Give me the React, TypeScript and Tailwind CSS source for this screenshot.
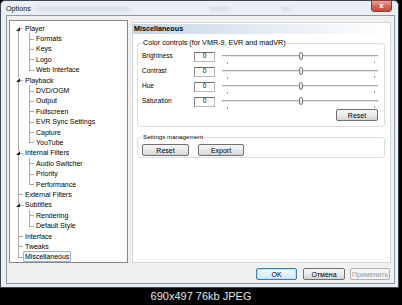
import React from 'react'

type Node = { label: string; level: 0 | 1; expand?: boolean; last?: boolean; selected?: boolean }

const tree: Node[] = [
  { label: 'Player', level: 0, expand: true },
  { label: 'Formats', level: 1 },
  { label: 'Keys', level: 1 },
  { label: 'Logo', level: 1 },
  { label: 'Web Interface', level: 1, last: true },
  { label: 'Playback', level: 0, expand: true },
  { label: 'DVD/OGM', level: 1 },
  { label: 'Output', level: 1 },
  { label: 'Fullscreen', level: 1 },
  { label: 'EVR Sync Settings', level: 1 },
  { label: 'Capture', level: 1 },
  { label: 'YouTube', level: 1, last: true },
  { label: 'Internal Filters', level: 0, expand: true },
  { label: 'Audio Switcher', level: 1 },
  { label: 'Priority', level: 1 },
  { label: 'Performance', level: 1, last: true },
  { label: 'External Filters', level: 0 },
  { label: 'Subtitles', level: 0, expand: true },
  { label: 'Rendering', level: 1 },
  { label: 'Default Style', level: 1, last: true },
  { label: 'Interface', level: 0 },
  { label: 'Tweaks', level: 0 },
  { label: 'Miscellaneous', level: 0, last: true, selected: true },
]

const btn =
  'flex items-center justify-center rounded-[2px] border border-[#707070] bg-linear-to-b from-[#f4f4f4] via-[#ebebeb] to-[#d4d4d4] text-[7px] leading-none text-black'

function TreeRow({ node, index }: { node: Node; index: number }) {
  const rootLine =
    node.level === 1 ? 'top-0 bottom-0' : index === 0 ? 'top-1/2 bottom-0' : node.last ? 'top-0 bottom-1/2' : 'top-0 bottom-0'
  return (
    <div className="relative flex h-[10.4px] items-center">
      <span className={`absolute left-[8px] w-px bg-[#a8a8a8] ${rootLine}`} />
      {node.level === 1 && (
        <span className={`absolute left-[19px] w-px bg-[#a8a8a8] top-0 ${node.last ? 'bottom-1/2' : 'bottom-0'}`} />
      )}
      <span className={`absolute top-1/2 h-px w-[5px] bg-[#a8a8a8] ${node.level === 0 ? 'left-[8px]' : 'left-[19px]'}`} />
      {node.expand && (
        <svg className="absolute left-[6px] top-[3.5px] h-[4px] w-[4px] bg-white" viewBox="0 0 4 4">
          <polygon points="4,0 4,4 0,4" fill="#2a2a2a" />
        </svg>
      )}
      <span
        className={`${node.level === 0 ? 'ml-[13px]' : 'ml-[24px]'} whitespace-nowrap px-[1px] text-[7px] leading-[9px] ${
          node.selected ? 'border border-[#9db4cc] bg-[#f3f8fd] rounded-[1px]' : 'border border-transparent'
        }`}
      >
        {node.label}
      </span>
    </div>
  )
}

function SliderRow({ label }: { label: string }) {
  return (
    <div className="flex h-[15px] items-center">
      <span className="w-[52px] text-[6.5px] leading-none">{label}</span>
      <div className="flex h-[10px] w-[21px] items-center justify-center border border-[#b5b8bd] border-t-[#6f6f6f] border-l-[#8a8a8a] bg-white text-[6.5px] leading-none">
        0
      </div>
      <div className="relative ml-[7px] h-full w-[156px]">
        <span className="absolute left-0 right-0 top-[6px] h-px bg-[#a9a9a9]" />
        <span className="absolute left-0 right-0 top-[7px] h-px bg-[#e6e6e6]" />
        <span className="absolute left-[77px] top-[2.5px] h-[8px] w-[4px] rounded-[2px] border border-[#7c7c7c] bg-linear-to-b from-white to-[#dcdcdc]" />
        <span className="absolute left-[5px] top-[13px] h-[2px] w-px bg-[#9a9a9a]" />
        <span className="absolute right-[3px] top-[12px] h-[2px] w-px bg-[#9a9a9a]" />
      </div>
    </div>
  )
}

export default function App() {
  return (
    <div className="flex h-[305px] w-[402px] flex-col overflow-hidden bg-black font-['Liberation_Sans',Arial,sans-serif] text-black">
      <div className="relative flex h-[288px] w-[399px] shrink-0 flex-col rounded-t-[5px] border border-[#3e4750] bg-[#e9eff5]">
        <div className="flex h-[14px] items-center pl-[5px] pt-[1px]">
          <span className="text-[7.2px] leading-none text-[#111]">Options</span>
          <span className="ml-[6px] h-[4px] w-[92px] rounded-full bg-[#c8ced6] opacity-60 blur-[1.5px]" />
          <span className="ml-[80px] h-[4px] w-[20px] rounded-full bg-[#cbd0d7] opacity-60 blur-[1.5px]" />
          <span className="ml-[52px] h-[4px] w-[9px] rounded-full bg-[#cbd0d7] opacity-60 blur-[1.5px]" />
        </div>
        <div className="absolute right-[6px] top-[-1px] flex h-[12px] w-[21px] items-center justify-center rounded-b-[3px] border border-[#8a3b34] bg-linear-to-b from-[#e9a99b] via-[#d2675b] to-[#c74a3d]">
          <span className="text-[8px] font-bold leading-none text-white">x</span>
        </div>

        <div className="ml-[5px] flex h-[269px] w-[389px] flex-col border border-[#8e99a5] bg-[#f0f0f0]">
          <div className="flex h-[247px] items-end">
            <div className="ml-[2px] h-[243px] w-[119px] border border-[#828790] bg-white pt-[2px]">
              {tree.map((n, i) => (
                <TreeRow key={n.label} node={n} index={i} />
              ))}
            </div>
            <div className="ml-[4px] flex h-[241px] w-[259px] flex-col border border-[#d5d5d5] bg-white">
              <div className="mr-[1px] mt-[1px] flex h-[10px] items-center bg-linear-to-r from-[#c6d6e6] via-[#e3ebf3] to-white pl-[1px]">
                <span className="text-[7.2px] font-bold leading-none">Miscellaneous</span>
              </div>

              <fieldset className="ml-[4px] mt-[5px] w-[248px] rounded-[3px] border border-[#d5dfe5] px-[4px] pb-[5px]">
                <legend className="ml-[1px] text-[7.2px] leading-[8px]">Color controls (for VMR-9, EVR and madVR)</legend>
                <div className="mt-[2px] flex flex-col">
                  <SliderRow label="Brightness" />
                  <SliderRow label="Contrast" />
                  <SliderRow label="Hue" />
                  <SliderRow label="Saturation" />
                </div>
                <div className="flex justify-end pr-[2px]">
                  <div className={`${btn} h-[12px] w-[42px]`}>Reset</div>
                </div>
              </fieldset>

              <fieldset className="ml-[4px] mt-[6px] w-[248px] rounded-[3px] border border-[#d5dfe5] px-[4px] pb-[1px]">
                <legend className="ml-[1px] text-[6.2px] leading-[8px]">Settings management</legend>
                <div className="mt-[3px] flex gap-[9px]">
                  <div className={`${btn} h-[12px] w-[47px]`}>Reset</div>
                  <div className={`${btn} h-[12px] w-[46px]`}>Export</div>
                </div>
              </fieldset>
            </div>
          </div>

          <div className="mt-[5px] flex justify-end pr-[4px]">
            <div className="flex h-[12px] w-[41px] items-center justify-center rounded-[2px] border border-[#3c7fb1] bg-linear-to-b from-[#f3f9fd] to-[#d3e8f7] text-[7px] leading-none shadow-[inset_0_0_0_1px_#b8e0f8]">
              OK
            </div>
            <div className={`${btn} ml-[6px] h-[12px] w-[42px]`}>Отмена</div>
            <div className="ml-[5px] flex h-[12px] w-[40px] items-center justify-center rounded-[2px] border border-[#adb2b5] bg-[#f4f4f4] text-[7px] leading-none text-[#9a9a9a]">
              Применить
            </div>
          </div>
        </div>
      </div>
      <div className="flex flex-1 items-center justify-center">
        <span className="text-[11px] leading-none text-[#e4e4e4]">690x497 76kb JPEG</span>
      </div>
    </div>
  )
}
